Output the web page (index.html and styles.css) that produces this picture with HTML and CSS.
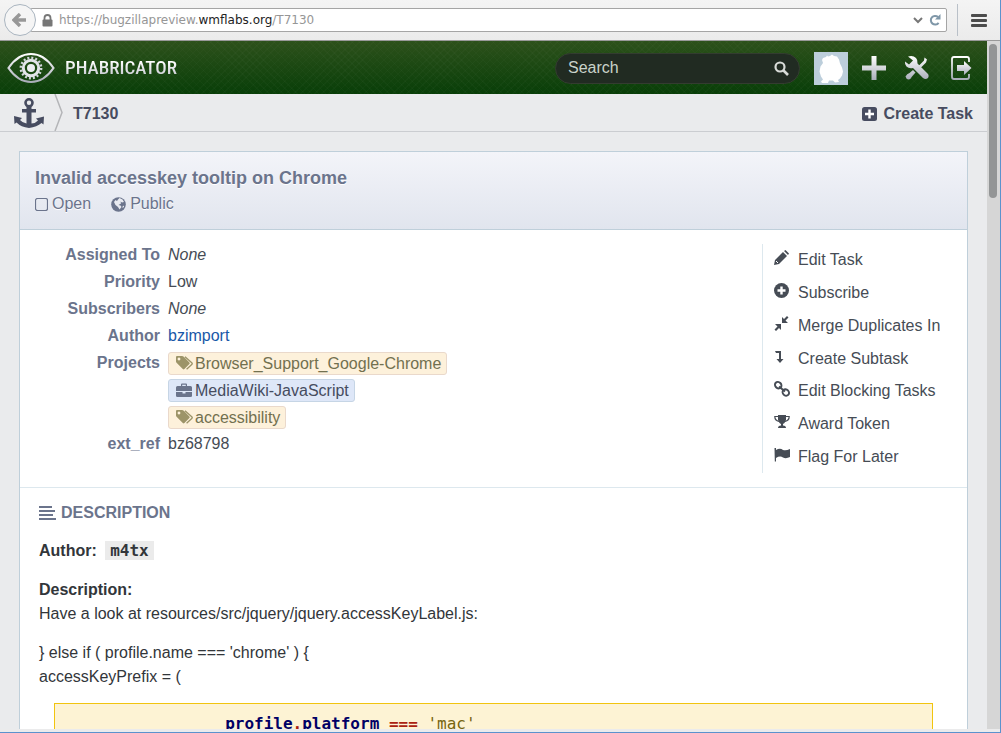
FILE: index.html
```html
<!DOCTYPE html>
<html lang="en">
<head>
<meta charset="utf-8">
<meta name="viewport" content="width=device-width, initial-scale=1">
<title>T7130 Invalid accesskey tooltip on Chrome</title>
<link rel="stylesheet" href="styles.css">
</head>
<body>
<svg class="defs" aria-hidden="true">
  <defs>
    <linearGradient id="metal" x1="0" y1="0" x2="0" y2="1">
      <stop offset="0" stop-color="#ffffff"/><stop offset="1" stop-color="#a9adb9"/>
    </linearGradient>
    <symbol id="tags" viewBox="0 0 18 15">
      <path fill="currentColor" fill-rule="evenodd" d="M0 1q0-1 1-1h5q1 0 1.800.8l5.600 5.600q.8.8 0 1.600l-5 5q-.8.8-1.600 0L.8 7Q0 6.200 0 5.500zM3 1.600a1.400 1.400 0 1 0 .01 0z"/>
      <path fill="none" stroke="currentColor" stroke-width="1.300" d="M9 .7l7 6.200q.6.700 0 1.400l-5.400 5"/>
    </symbol>
  </defs>
</svg>
<div class="window">
  <div class="toolbar">
    <button class="back" aria-label="Back"><svg width="16" height="14" viewBox="0 0 16 14"><path d="M8 1L2 7l6 6M2.500 7H14" fill="none" stroke="#989898" stroke-width="3.400"/></svg></button>
    <div class="address">
      <svg width="11" height="13" viewBox="0 0 11 13"><path d="M2.500 6V4a3 3 0 0 1 6 0v2" fill="none" stroke="#777" stroke-width="1.800"/><rect x=".5" y="5.500" width="10" height="7" rx="1" fill="#777"/></svg>
      <div class="url" role="textbox" aria-label="Address">https://bugzillapreview.<span class="host">wmflabs.org</span>/T7130</div>
      <button class="plain" aria-label="History"><svg width="10" height="7" viewBox="0 0 10 7"><path d="M1 1l4 4 4-4" fill="none" stroke="#777" stroke-width="2"/></svg></button>
      <button class="plain" aria-label="Reload"><svg width="12" height="12" viewBox="0 0 12 12"><path d="M9 3A4.300 4.300 0 1 0 9.600 8.800" fill="none" stroke="#7f97a8" stroke-width="2"/><path d="M11.500 0v5.500H6z" fill="#7f97a8"/></svg></button>
    </div>
    <button class="menu" aria-label="Menu"><svg width="16" height="13" viewBox="0 0 16 13"><path d="M1 1.500h14M1 6.500h14M1 11.500h14" stroke="#4c4c4c" stroke-width="2.800" stroke-linecap="round"/></svg></button>
  </div>
  <div class="view">
    <div class="page">
      <header class="masthead">
        <a class="brand" href="#">
          <svg width="48" height="32" viewBox="0 0 48 32">
            <path d="M1.500 16Q11 2 24 2t22.500 14Q37 30 24 30T1.500 16z" fill="none" stroke="url(#metal)" stroke-width="2.200"/>
            <circle cx="24" cy="16" r="10.200" fill="none" stroke="#d3d6dc" stroke-width="2.400" stroke-dasharray="2 2.006"/>
            <circle cx="24" cy="16" r="7.700" fill="none" stroke="#e3e5e9" stroke-width="3"/>
            <circle cx="24" cy="16" r="4" fill="#edeef1"/>
          </svg>
          <span class="wordmark">PHABRICATOR</span>
        </a>
        <form class="search" role="search">
          <input type="text" placeholder="Search" aria-label="Search">
          <button class="plain" type="button" aria-label="Search"><svg width="15" height="15" viewBox="0 0 15 15"><circle cx="6" cy="6" r="4.500" fill="none" stroke="#d8dbd8" stroke-width="2.200"/><path d="M9 9l5 5" stroke="#d8dbd8" stroke-width="2.600"/></svg></button>
        </form>
        <nav class="tools">
          <a href="#" aria-label="Profile"><svg width="34" height="33" viewBox="0 0 34 33"><path fill="#bccedb" d="M0 0h34v33H0z"/><path fill="#fff" d="M9 6l3-1 1-1.500 1 1 2-.5 2-1.500 2 1.500 3 .5 2 3 1 4 2 4 1 4-1 4-2 3-2 1.500 1 2-4 .500-2-2h-4l-1 2.500H8l-1-1.500 2-2-2-3-1.500-5 1-5L9 11 8 8z"/></svg></a>
          <a href="#" aria-label="Create"><svg width="26" height="26" viewBox="0 0 26 26"><path fill="url(#metal)" d="M10.500 1h5v9.500H25v5h-9.500V25h-5v-9.500H1v-5h9.500z"/></svg></a>
          <a href="#" aria-label="Utilities"><svg width="26" height="26" viewBox="0 0 26 26"><path fill="url(#metal)" d="M4 1.500Q9 0 12 3q2 2 1.500 5.500l10 10q2 2 .5 4.500-2.500 2-5 0l-10-10q-4 1-6.500-1.500-2-2-1.500-5l4 3 4-4zM20.500 2.500l2.500 2-1 3-5.500 5.500-2-2L20 5.500zM9 15l2.500 2.500L8 21.500Q7 24 4.500 24.500 2 24 1.500 21.500 3 18.500 5.500 18z"/></svg></a>
          <a href="#" aria-label="Log out"><svg width="22" height="26" viewBox="0 0 22 26"><path fill="none" stroke="url(#metal)" stroke-width="1.800" d="M19 7V4q0-2-2-2H4Q2 2 2 4v18q0 2 2 2h13q2 0 2-2v-3"/><path fill="url(#metal)" d="M7 10h7V6l7.500 7-7.500 7v-4H7z"/></svg></a>
        </nav>
      </header>
      <nav class="crumbs">
        <a class="app" href="#" aria-label="Maniphest"><svg width="30" height="30" viewBox="0 0 30 30"><circle cx="15" cy="4.800" r="3.500" fill="none" stroke="#474c60" stroke-width="2.600"/><path fill="#474c60" d="M12.500 8h5v3h4.500v3.500h-4.500v11q4.500-.5 6.500-3l-2-2 8-2-.5 8-2-1.500Q23 29 15 30 7 29 2.500 24.500L.5 26 0 18l8 2-2 2q2 2.500 6.500 3.500v-11H8V11h4.500z"/></svg></a>
        <svg class="chevron" width="10" height="37" viewBox="0 0 10 37"><path d="M1 0l7 18.500L1 37" fill="none" stroke="#b4b5b8" stroke-width="1.500"/></svg>
        <a class="crumb" href="#">T7130</a>
        <a class="create" href="#"><svg width="15" height="14" viewBox="0 0 15 14"><rect width="15" height="14" rx="2.500" fill="#474c60"/><path d="M7.500 2.500v9M3 7h9" stroke="#fff" stroke-width="2.400"/></svg>Create Task</a>
      </nav>
      <main class="card">
        <header class="card-head">
          <h1>Invalid accesskey tooltip on Chrome</h1>
          <div class="status">
            <span><svg width="13" height="13" viewBox="0 0 13 13"><rect x=".5" y=".5" width="12" height="12" rx="2" fill="none" stroke="#6b748c" stroke-width="1.200"/></svg>Open</span>
            <span><svg width="15" height="15" viewBox="0 0 15 15"><circle cx="7.500" cy="7.500" r="7.300" fill="#6b748c"/><path fill="#e9ebf1" d="M8.500 1l3 1.500 1.500 2.500-2 .5-1.500-1 .5 2L7.500 8l2 .5 1 1.500-2 2.500L7 10 4.500 8 3 5l1.500-2 1.500 1L7 2.500zM11.500 9.500l1.500-1v1.500l-1.500 1z"/></svg>Public</span>
          </div>
        </header>
        <div class="details">
          <dl class="props">
            <dt>Assigned To</dt><dd><em>None</em></dd>
            <dt>Priority</dt><dd>Low</dd>
            <dt>Subscribers</dt><dd><em>None</em></dd>
            <dt>Author</dt><dd><a href="#">bzimport</a></dd>
            <dt>Projects</dt>
            <dd><a class="tag" href="#"><svg width="18" height="15"><use href="#tags"/></svg>Browser_Support_Google-Chrome</a></dd>
            <dd><a class="tag tag-blue" href="#"><svg width="18" height="15" viewBox="0 0 18 15"><path fill="#6b748c" fill-rule="evenodd" d="M5 3V1.500Q5 .5 6 .5h4q1 0 1 1V3h3.500Q16 3 16 4.500V8H0V4.500Q0 3 1.500 3zM6.200 3h3.600V1.700H6.200zM0 9h6.500v1.500h3V9H16v4q0 1-1.500 1h-13Q0 14 0 13z"/></svg>MediaWiki-JavaScript</a></dd>
            <dd><a class="tag" href="#"><svg width="18" height="15"><use href="#tags"/></svg>accessibility</a></dd>
            <dt>ext_ref</dt><dd>bz68798</dd>
          </dl>
          <ul class="actions">
            <li><a href="#"><svg width="16" height="16" viewBox="0 0 16 16"><path d="M0 15l1-5 8-8 4 4-8 8zM10 1l1.500-1 3.500 3.500L14 5z"/><path d="M2 11l2 2" stroke="#fff"/></svg>Edit Task</a></li>
            <li><a href="#"><svg width="16" height="16" viewBox="0 0 16 16"><circle cx="7.500" cy="7.500" r="7.500"/><path d="M7.500 3.500v8M3.500 7.500h8" stroke="#fff" stroke-width="2.400"/></svg>Subscribe</a></li>
            <li><a href="#"><svg width="16" height="16" viewBox="0 0 16 16"><path d="M7 8v6l-2-2-3 3-1.500-1.500 3-3L1 8zM8 7V1l2 2 3-3 1.500 1.500-3 3L14 7z"/></svg>Merge Duplicates In</a></li>
            <li><a href="#"><svg width="16" height="16" viewBox="0 0 16 16"><path d="M1 2h6v8h2.500l-3.500 4-3.500-4H5V4H2z"/></svg>Create Subtask</a></li>
            <li><a href="#"><svg width="16" height="16" viewBox="0 0 16 16"><g fill="none" stroke="#464c55" stroke-width="2"><ellipse cx="4.200" cy="4.200" rx="3.400" ry="3" transform="rotate(45 4.200 4.200)"/><ellipse cx="11.800" cy="11.500" rx="3.400" ry="3" transform="rotate(45 11.800 11.500)"/><path d="M5 5.500l6 5"/></g></svg>Edit Blocking Tasks</a></li>
            <li><a href="#"><svg width="16" height="16" viewBox="0 0 16 16"><path d="M4 1h8v5q-1 3-3 4v1.500q3 0 3 2.500H4q0-2.500 3-2.500V10Q5 9 4 6z"/><path d="M4 2.500H.8q0 4 4.200 5M12 2.500h3.200q0 4-4.200 5" fill="none" stroke="#464c55" stroke-width="1.200"/></svg>Award Token</a></li>
            <li><a href="#"><svg width="16" height="16" viewBox="0 0 16 16"><path d="M.5 1h1.500v13.500H.8zM2 3q4-2.500 7 0 3 1 7-1v8q-4 2-7 .5-3-2-7 .5z"/></svg>Flag For Later</a></li>
          </ul>
        </div>
        <section class="description">
          <h2><svg width="17" height="14" viewBox="0 0 17 14"><path d="M0 1h13M0 5h16M0 9h14M0 13h17" stroke="#6b748c" stroke-width="1.800"/></svg>DESCRIPTION</h2>
          <p><strong>Author: <code>m4tx</code></strong></p>
          <p><strong>Description:</strong><br>Have a look at resources/src/jquery/jquery.accessKeyLabel.js:</p>
          <p>} else if ( profile.name === 'chrome' ) {<br>accessKeyPrefix = (</p>
          <pre><b>                profile<i>.</i>platform <i>===</i></b> <s>'mac'</s></pre>
        </section>
      </main>
    </div>
    <div class="scrollbar"><div class="thumb"></div></div>
  </div>
</div>
</body>
</html>
```
FILE: styles.css
```css
* { box-sizing: border-box; }
body {
  margin: 0;
  font: 16px/24px "Liberation Sans", Arial, sans-serif;
  color: #32363a;
  background: #ebebec;
}
a { color: inherit; text-decoration: none; }
svg { flex: none; display: block; }
.defs { position: absolute; width: 0; height: 0; }
.plain { border: 0; padding: 0; background: none; }

.window {
  display: flex;
  flex-direction: column;
  height: 100vh;
  padding-bottom: 3px;
  border-right: 1px solid #5b92cd;
  border-bottom: 1px solid #5b92cd;
  overflow: hidden;
}
.toolbar {
  flex: none;
  display: flex;
  align-items: center;
  height: 41px;
  padding: 0 13px 0 4px;
  background: linear-gradient(#f4f4f4, #ebebeb);
  border-bottom: 1px solid #999;
}
.back {
  z-index: 1;
  display: grid;
  place-items: center;
  width: 32px;
  height: 32px;
  padding: 0;
  border: 1px solid #aab5c0;
  border-radius: 50%;
  background: #f5f5f5;
}
.address {
  flex: 1;
  display: flex;
  align-items: center;
  gap: 6px;
  height: 24px;
  margin-left: -6px;
  padding: 0 5px 0 11px;
  border: 1px solid #a5a5a5;
  border-radius: 2px;
  background: #fff;
}
.url {
  flex: 1;
  font: 12px/22px "DejaVu Sans", sans-serif;
  color: #969696;
  white-space: nowrap;
}
.host { color: #222; }
.menu {
  height: 32px;
  margin-left: 10px;
  padding: 0 0 0 13px;
  border: 0;
  border-left: 1px solid #b9c0c8;
  background: none;
}

.view { flex: 1; display: flex; min-height: 0; }
.page { flex: 1; min-width: 0; overflow: hidden; background: #eaebed; }
.scrollbar { flex: none; width: 13px; padding: 3px 2px; background: #d6d6d6; }
.thumb { width: 8px; height: 154px; border-radius: 4px; background: #939596; }

.masthead {
  display: flex;
  align-items: center;
  height: 53px;
  padding: 1px 15px 0 7px;
  background:
    repeating-linear-gradient(45deg, rgba(255,255,255,.02) 0 1px, transparent 1px 5px),
    repeating-linear-gradient(-45deg, rgba(255,255,255,.02) 0 1px, transparent 1px 5px),
    linear-gradient(#2d511b, #083e08);
}
.brand { display: flex; align-items: center; gap: 10px; }
.wordmark {
  font: 500 19px/30px "Roboto Condensed", Roboto, sans-serif;
  color: transparent;
  background: linear-gradient(#fff 30%, #a9adb9);
  background-clip: text;
}
.search {
  display: flex;
  align-items: center;
  width: 245px;
  height: 31px;
  margin-left: auto;
  padding: 0 10px 0 12px;
  border: 1px solid #333c30;
  border-radius: 16px;
  background: #212b22;
}
.search input {
  flex: 1;
  min-width: 0;
  padding: 0;
  border: 0;
  outline: 0;
  background: none;
  font: inherit;
  color: #c9d3ca;
}
.search input::placeholder { color: #c9d3ca; opacity: 1; }
.tools { display: flex; align-items: center; gap: 17px; margin-left: 14px; }
.tools a:first-child { margin-right: -4px; }
.tools a:last-child { margin-left: 3px; }

.crumbs {
  display: flex;
  align-items: center;
  height: 38px;
  padding: 0 14px;
  border-bottom: 1px solid #cbcdd1;
  font-weight: bold;
  line-height: 26px;
  color: #474c60;
}
.crumb, .create { padding-top: 2px; }
.chevron { margin: 0 9px 0 10px; }
.create { display: flex; align-items: center; gap: 6px; margin-left: auto; }

.card { margin: 19px; border: 1px solid #bfcfda; background: #fff; }
.card-head {
  height: 78px;
  padding: 14px 15px;
  border-bottom: 1px solid #bfcfda;
  background: linear-gradient(#f3f4f9, #e1e5ee);
  color: #6b748c;
  text-shadow: 0 1px 0 #fff;
}
h1 { margin: 0; font-size: 18px; line-height: 24px; }
.status { display: flex; gap: 20px; line-height: 28px; }
.status span { display: flex; align-items: center; gap: 4px; }

.details {
  display: flex;
  justify-content: space-between;
  padding: 14px 5px 14px 15px;
  border-bottom: 1px solid #dde8ee;
}
.props {
  display: grid;
  grid-template-columns: 125px auto;
  column-gap: 8px;
  grid-auto-rows: 27px;
  margin: 0;
  margin-top: -3px;
  line-height: 28px;
}
dt { grid-column: 1; text-align: right; font-weight: bold; color: #6b748c; }
dd { grid-column: 2; margin: 0; color: #464c55; }
dd a { color: #1858a8; }
.tag {
  display: inline-flex;
  align-items: center;
  height: 23px;
  padding: 0 5px 0 7px;
  border: 1px solid #ead9cb;
  border-radius: 3px;
  background: #fdf1db;
  color: #72704f;
  line-height: 21px;
  gap: 1px;
  vertical-align: middle;
}
.tag svg { color: #9c9468; }
.tag-blue { border-color: #c6d5e5; background: #dee7f8; color: #464c60; }
.actions {
  display: flex;
  flex-direction: column;
  width: 200px;
  height: 229px;
  margin: 0;
  padding: 0 0 0 11px;
  border-left: 1px solid #dde8ee;
  list-style: none;
  color: #464c55;
  line-height: 28px;
}
.actions li { flex: 1; display: flex; align-items: center; }
.actions a { display: flex; gap: 8px; white-space: nowrap; }
.actions svg { margin-top: 4px; fill: #464c55; }

.description { padding: 13px 19px; }
h2 {
  display: flex;
  align-items: center;
  gap: 5px;
  margin: 0 0 14px;
  font-size: 16px;
  line-height: 24px;
  color: #6b748c;
}
p { margin: 0 0 15px; }
code {
  margin-left: 4px;
  padding: 0 5px;
  background: #ebebeb;
  font: 16px/20px "DejaVu Sans Mono", monospace;
  font-weight: bold;
}
pre {
  margin: -1px 15px 0;
  padding: 8px 16px;
  border: 1px solid #f1c40f;
  background: #fdf3d4;
  font: 16px/24px "DejaVu Sans Mono", monospace;
}
pre b { color: #000066; }
pre i { font-style: normal; color: #aa2211; }
pre s { text-decoration: none; color: #766510; }
```
